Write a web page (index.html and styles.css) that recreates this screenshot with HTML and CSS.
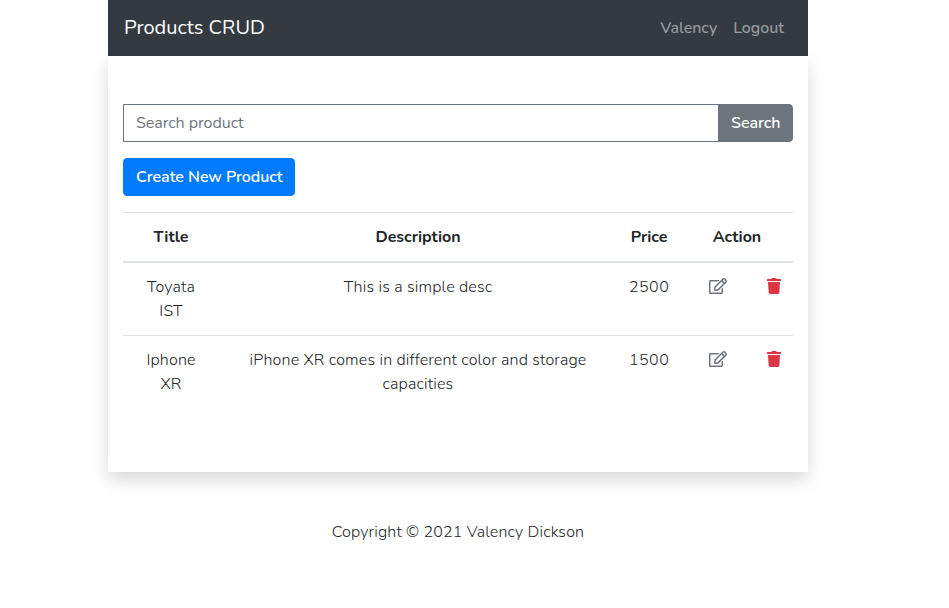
FILE: index.html
```html
<!DOCTYPE html>
<html lang="en">
<head>
<meta charset="utf-8">
<title>Products CRUD</title>
<link rel="stylesheet" href="styles.css">
</head>
<body>
<svg width="0" height="0" class="sprite" aria-hidden="true">
  <symbol id="edit" viewBox="0 0 576 512"><path d="M402.3 344.9l32-32c5-5 13.7-1.5 13.7 5.7V464c0 26.5-21.5 48-48 48H48c-26.5 0-48-21.5-48-48V112c0-26.5 21.5-48 48-48h273.5c7.1 0 10.7 8.6 5.7 13.7l-32 32c-1.5 1.5-3.5 2.3-5.7 2.3H48v352h352V350.5c0-2.1.8-4.1 2.3-5.6zm156.6-201.8L296.3 405.7l-90.4 10c-26.2 2.9-48.5-19.2-45.6-45.6l10-90.4L432.9 17.1c22.9-22.9 59.9-22.9 82.7 0l43.2 43.2c22.9 22.9 22.9 60 .1 82.8zM460.1 174L402 115.9 216.2 301.8l-7.3 65.3 65.3-7.3L460.1 174zm64.8-79.7l-43.2-43.2c-4.1-4.1-10.8-4.1-14.8 0L436 82l58.1 58.1 30.9-30.9c4-4.2 4-10.8-.1-14.9z"/></symbol>
  <symbol id="trash" viewBox="0 0 448 512"><path d="M432 32H312l-9.4-18.7A24 24 0 0 0 281.1 0H166.8a23.72 23.72 0 0 0-21.4 13.3L136 32H16A16 16 0 0 0 0 48v32a16 16 0 0 0 16 16h416a16 16 0 0 0 16-16V48a16 16 0 0 0-16-16zM53.2 467a48 48 0 0 0 47.9 45h245.8a48 48 0 0 0 47.9-45L416 128H32z"/></symbol>
</svg>
<div class="page">
  <nav class="navbar">
    <a class="brand">Products CRUD</a>
    <div class="links"><a>Valency</a><a>Logout</a></div>
  </nav>
  <main class="card">
    <form class="search">
      <input type="text" placeholder="Search product">
      <button type="button" class="btn btn-search">Search</button>
    </form>
    <a class="btn btn-create">Create New Product</a>
    <table>
      <colgroup><col class="c-title"><col class="c-desc"><col class="c-price"><col class="c-edit"><col class="c-trash"></colgroup>
      <thead>
        <tr><th>Title</th><th>Description</th><th>Price</th><th colspan="2">Action</th></tr>
      </thead>
      <tbody>
        <tr>
          <td>Toyata IST</td><td>This is a simple desc</td><td class="price">2500</td>
          <td><svg class="edit"><use href="#edit"/></svg></td>
          <td><svg class="trash"><use href="#trash"/></svg></td>
        </tr>
        <tr>
          <td>Iphone XR</td><td>iPhone XR comes in different color and storage capacities</td><td class="price">1500</td>
          <td><svg class="edit"><use href="#edit"/></svg></td>
          <td><svg class="trash"><use href="#trash"/></svg></td>
        </tr>
      </tbody>
    </table>
  </main>
  <footer>Copyright © 2021 Valency Dickson</footer>
</div>
</body>
</html>
```
FILE: styles.css
```css
*, *::before, *::after { box-sizing: border-box; }

body {
  margin: 0;
  background: #fff;
  color: #212529;
  font: 300 16px/24px Nunito, "Open Sans", sans-serif;
}

.sprite { display: block; }

.page {
  width: 700px;
  margin-left: 108px;
}

.navbar {
  display: flex;
  align-items: center;
  justify-content: space-between;
  height: 56px;
  padding: 8px 16px;
  background: #343a40;
}

.brand {
  color: #fff;
  font-size: 20px;
  font-weight: 400;
  line-height: 30px;
}

.links {
  display: flex;
  color: rgba(255, 255, 255, .5);
  font-weight: 500;
}

.links a { padding: 8px; }

.card {
  height: 416px;
  padding: 48px 15px;
  background: #fff;
  box-shadow: 0 8px 16px rgba(0, 0, 0, .15);
}

.search {
  display: flex;
  margin-bottom: 16px;
}

.search input {
  flex: 1;
  min-width: 0;
  height: 38px;
  padding: 6px 12px;
  border: 1px solid #6c757d;
  border-radius: 0;
  background: #fff;
  font: 400 16px/24px Nunito, "Open Sans", sans-serif;
  letter-spacing: -.05px;
}

.search input::placeholder { color: #6c757d; opacity: 1; }

.btn {
  display: inline-block;
  padding: 6px 12px;
  border: 1px solid;
  border-radius: 4px;
  color: #fff;
  font: 600 16px/24px Nunito, "Open Sans", sans-serif;
  letter-spacing: -.05px;
}

.btn-search {
  width: 75px;
  margin-left: -1px;
  border-color: #6c757d;
  border-radius: 0 4px 4px 0;
  background: #6c757d;
}

.btn-create {
  display: block;
  width: 172px;
  border-color: #007bff;
  background: #007bff;
  white-space: nowrap;
}

table {
  width: 100%;
  margin-top: 16px;
  border-collapse: collapse;
  table-layout: fixed;
  text-align: center;
  letter-spacing: .17px;
}

.c-title { width: 96px; }
.c-desc { width: 398px; }
.c-price { width: 64px; }
.c-edit { width: 74px; }
.c-trash { width: 38px; }

th, td {
  padding: 12px;
  border-top: 1px solid #dee2e6;
  vertical-align: top;
}

th {
  border-bottom: 2px solid #dee2e6;
  font-weight: 700;
  letter-spacing: 0;
}

.price { letter-spacing: .45px; }

td svg { height: 16px; vertical-align: -2px; fill: currentColor; }
.edit { width: 18px; color: #6c757d; }
.trash { width: 14px; color: #dc3545; }

footer {
  margin-top: 48px;
  text-align: center;
  letter-spacing: .15px;
}
```
